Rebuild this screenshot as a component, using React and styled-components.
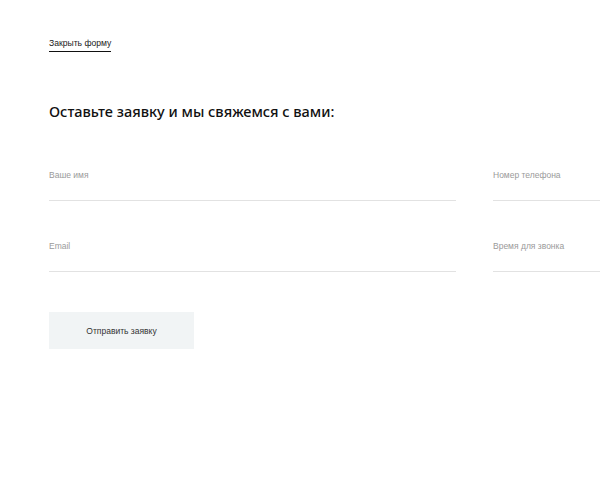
import React from 'react';
import styled, { createGlobalStyle } from 'styled-components';

const GlobalStyle = createGlobalStyle`
  html, body {
    margin: 0;
    padding: 0;
    background: #fff;
    overflow: hidden;
  }
`;

function App() {
  return (
    <Page>
      <GlobalStyle />
      <CloseRow>
        <CloseLink href="#">Закрыть форму</CloseLink>
      </CloseRow>
      <Title>Оставьте заявку и мы свяжемся с вами:</Title>
      <Fields>
        <Field>
          <Label>Ваше имя</Label>
        </Field>
        <Field>
          <Label>Номер телефона</Label>
        </Field>
        <Field>
          <Label>Email</Label>
        </Field>
        <Field>
          <Label>Время для звонка</Label>
        </Field>
      </Fields>
      <Submit>Отправить заявку</Submit>
    </Page>
  );
}

export default App;

const Page = styled.div`
  width: 600px;
  height: 500px;
  box-sizing: border-box;
  padding: 37px 0 0 49px;
  overflow: hidden;
`;

const CloseRow = styled.div`
  display: flex;
`;

const CloseLink = styled.a`
  display: block;
  font-family: 'Liberation Sans', Arial, sans-serif;
  font-size: 8.6px;
  color: #222;
  text-decoration: none;
  line-height: 12px;
  padding-bottom: 2px;
  border-bottom: 1.5px solid #111;
`;

const Title = styled.h2`
  margin: 49px 0 0;
  font-family: 'Noto Sans', sans-serif;
  font-weight: 500;
  font-size: 14.5px;
  line-height: 20px;
  color: #111;
`;

const Fields = styled.div`
  display: grid;
  grid-template-columns: 407px 407px;
  column-gap: 37px;
  row-gap: 36px;
  margin-top: 45px;
`;

const Field = styled.div`
  height: 35px;
  border-bottom: 1px solid #e2e2e2;
  box-sizing: border-box;
`;

const Label = styled.div`
  font-family: 'Liberation Sans', Arial, sans-serif;
  font-size: 8.5px;
  color: #9a9a9a;
  line-height: 12px;
  padding-top: 3px;
`;

const Submit = styled.button`
  display: block;
  margin-top: 40px;
  width: 145px;
  height: 37px;
  border: none;
  background: #f1f4f5;
  font-family: 'Liberation Sans', Arial, sans-serif;
  font-size: 8.5px;
  color: #333;
  cursor: pointer;
`;
